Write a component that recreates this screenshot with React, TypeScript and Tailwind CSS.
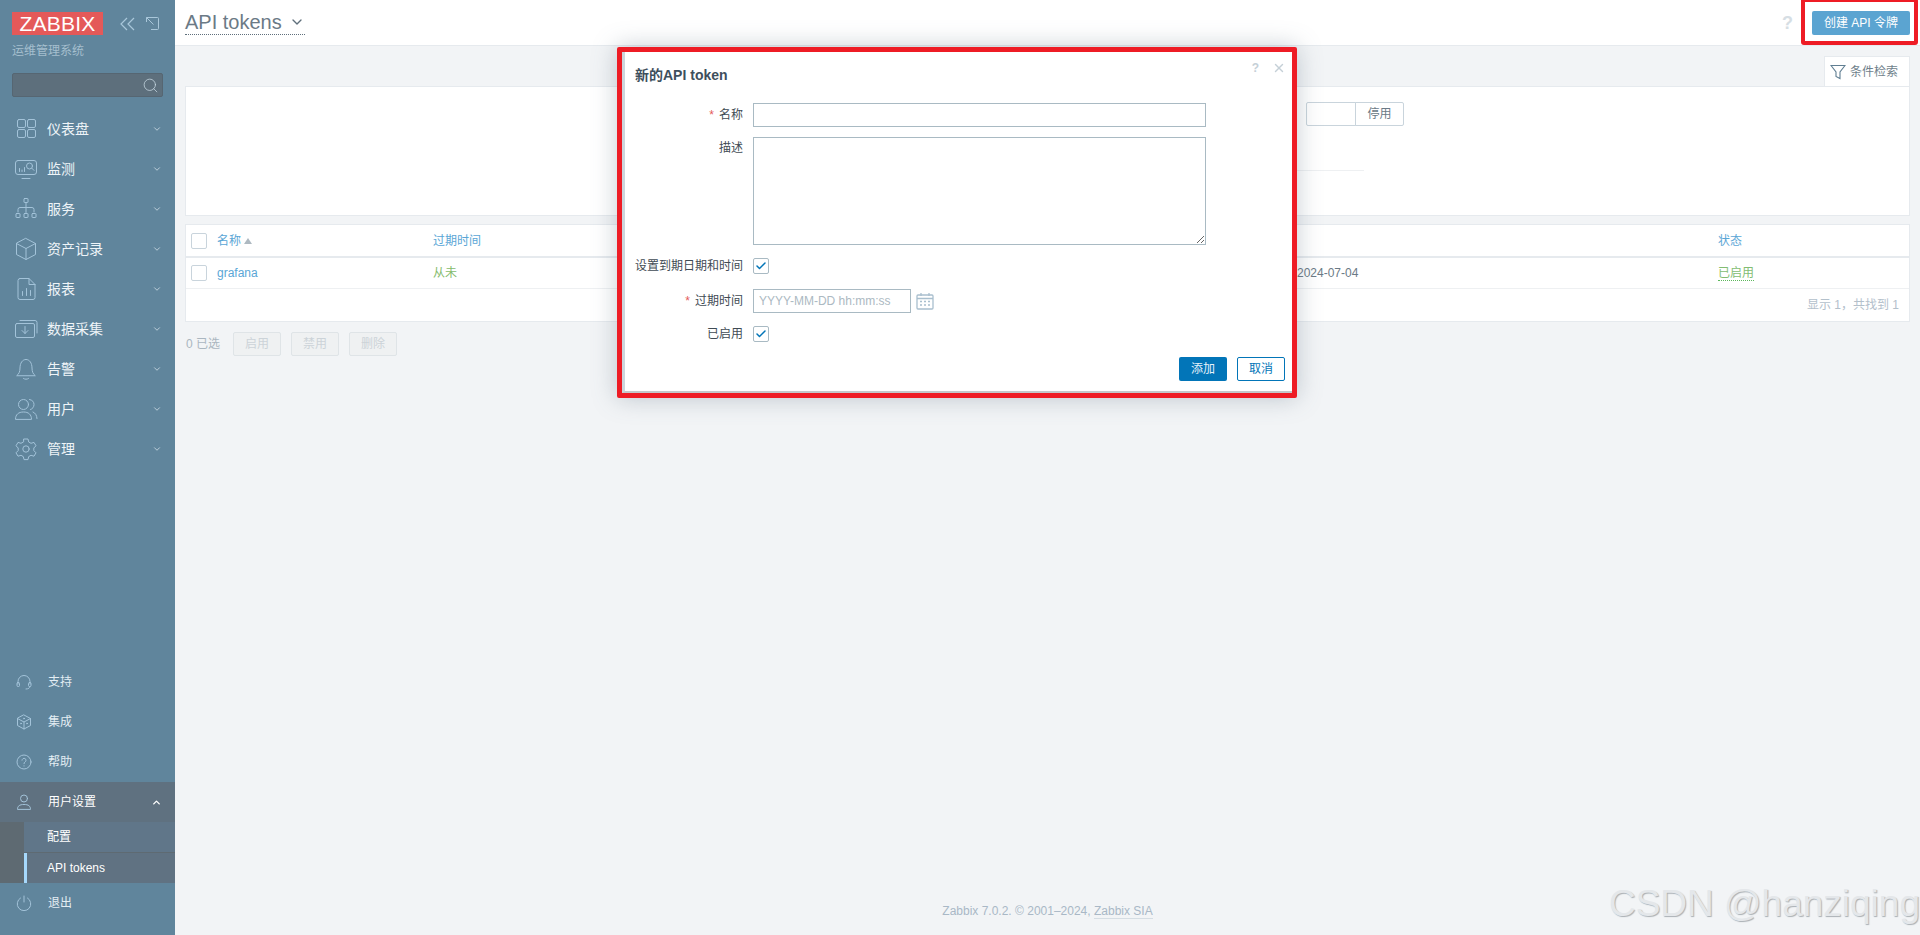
import React from 'react';
import { Check, ChevronDown, ChevronUp, Search, X } from 'lucide-react';

const FONT = { fontFamily: '"Liberation Sans", "Noto Sans CJK SC", sans-serif' };

const Ico: React.FC<{ size?: number; vb?: number; children: React.ReactNode }> = ({ size = 24, vb = 24, children }) => (
  <svg width={size} height={size} viewBox={`0 0 ${vb} ${vb}`} fill="none" stroke="#a3c3d9" strokeWidth="1" strokeLinecap="round" strokeLinejoin="round">
    {children}
  </svg>
);

const icons: Record<string, React.ReactNode> = {
  dashboard: (
    <Ico>
      <rect x="3.5" y="2.5" width="8" height="8" rx="1.5" />
      <rect x="13.5" y="2.5" width="8" height="8" rx="1.5" />
      <rect x="3.5" y="12.5" width="8" height="8" rx="1.5" />
      <rect x="13.5" y="12.5" width="8" height="8" rx="1.5" />
    </Ico>
  ),
  monitor: (
    <Ico>
      <rect x="1.5" y="3.5" width="21" height="14" rx="2.5" />
      <path d="M8 21.5h8M5.5 14.5v-3M8 14.5v-1.5M10.5 14.5v-4" />
      <circle cx="15.5" cy="9" r="3" />
      <path d="M17.8 11.2l2.2 2.2" />
    </Ico>
  ),
  services: (
    <Ico>
      <rect x="10" y="1.5" width="4" height="4" rx="0.5" />
      <path d="M12 5.5v10M4 15v-2.5a2 2 0 0 1 2-2h12a2 2 0 0 1 2 2V15" />
      <rect x="2" y="16.5" width="4" height="4" rx="0.5" />
      <rect x="10" y="16.5" width="4" height="4" rx="0.5" />
      <rect x="18" y="16.5" width="4" height="4" rx="0.5" />
    </Ico>
  ),
  box: (
    <Ico>
      <path d="M12 1.5l9.5 5v11l-9.5 5-9.5-5v-11z" />
      <path d="M2.5 6.5l9.5 5 9.5-5M12 11.5v11" />
    </Ico>
  ),
  report: (
    <Ico>
      <path d="M6 1.5h9l6 6v13a2 2 0 0 1-2 2H6a2 2 0 0 1-2-2v-17a2 2 0 0 1 2-2z" />
      <path d="M15 1.5v6h6M8.5 18.5v-4M12.5 18.5v-7M16.5 18.5v-5" />
    </Ico>
  ),
  collect: (
    <Ico>
      <rect x="1.5" y="6.5" width="19" height="14" rx="1.5" />
      <path d="M6 3.5h15a2 2 0 0 1 2 2V16M11 9.5v7M8 13.5l3 3 3-3" />
    </Ico>
  ),
  bell: (
    <Ico>
      <path d="M3 18.5c2-1.5 3-4 3-7.5 0-5 2.5-8.5 6-8.5s6 3.500 6 8.500c0 3.500 1 6 3 7.500z" />
      <path d="M9.500 21.500c1.500 1 3.500 1 5 0" />
    </Ico>
  ),
  users: (
    <Ico>
      <circle cx="9.500" cy="7.500" r="5" />
      <path d="M1.500 22c0-4.500 3-7 8-7s8 2.500 8 7zM15.500 2.500c3 .5 4.500 2.500 4.500 5s-1.500 4.500-3.500 5M19 15c2.500 1 3.800 3.500 4 6.500" />
    </Ico>
  ),
  gear: (
    <Ico>
      <path d="M10 2h4l.7 3 2.300 1.300 3-.9 2 3.400-2.200 2.200v2.600l2.200 2.200-2 3.400-3-.9-2.300 1.300-.7 3h-4l-.7-3-2.300-1.300-3 .9-2-3.400 2.200-2.200v-2.600L2 8.800l2-3.400 3 .9 2.300-1.300z" />
      <circle cx="12" cy="12" r="3.200" />
    </Ico>
  ),
  support: (
    <Ico size={16} vb={16}>
      <path d="M2 10V7.500a6 6 0 0 1 12 0V10" />
      <rect x="1" y="8.500" width="2.500" height="4" rx="1" />
      <rect x="12.500" y="8.500" width="2.500" height="4" rx="1" />
      <path d="M14 12.500c0 1.500-1.500 2.500-4 2.500" />
    </Ico>
  ),
  integration: (
    <Ico size={16} vb={16}>
      <path d="M8 1l6.500 3.500v7L8 15l-6.500-3.500v-7z" />
      <path d="M1.500 4.500L8 8l6.500-3.500M8 8v7" />
      <circle cx="8" cy="4.500" r="0.500" />
      <circle cx="5" cy="9.500" r="0.500" />
      <circle cx="11" cy="9.500" r="0.500" />
    </Ico>
  ),
  help: (
    <Ico size={16} vb={16}>
      <circle cx="8" cy="8" r="7" />
      <path d="M6 6.200a2 2 0 1 1 3 1.800c-.7.4-1 .9-1 1.700M8 11.800v.2" />
    </Ico>
  ),
  profile: (
    <Ico size={16} vb={16}>
      <circle cx="8" cy="4.500" r="3.500" />
      <path d="M1.500 15c0-3 2-4.500 6.500-4.500s6.500 1.500 6.500 4.500z" />
    </Ico>
  ),
  power: (
    <Ico size={16} vb={16}>
      <path d="M8 1v6M4.500 3a6.800 6.800 0 1 0 7 0" />
    </Ico>
  ),
};

const NavItem: React.FC<{ icon: string; label: string }> = ({ icon, label }) => (
  <div className="flex items-center h-10 pl-[14px] pr-[13px] text-sm text-[#eef4f8]">
    <span className="w-[33px] flex">{icons[icon]}</span>
    <span className="flex-1">{label}</span>
    <ChevronDown size={10} className="text-[#cddbe4]" strokeWidth={2} />
  </div>
);

const BottomItem: React.FC<{ icon: string; label: string }> = ({ icon, label }) => (
  <div className="flex items-center h-10 pl-[16px] text-xs text-[#e3edf3]">
    <span className="w-[32px] flex">{icons[icon]}</span>
    {label}
  </div>
);

const Sidebar = () => (
  <aside className="w-[175px] shrink-0 h-full bg-[#60859c] flex flex-col">
    <div className="flex items-start pl-3 pt-3">
      <div className="w-[91px] h-[23px] bg-[#e45959] text-white text-[21px] leading-[24px] text-center tracking-[0.2px]">ZABBIX</div>
      <svg width="16" height="14" viewBox="0 0 16 14" fill="none" stroke="#a9c7da" strokeWidth="1.200" className="ml-[17px] mt-[5px]">
        <path d="M7 1L1 7l6 6M14 1L8 7l6 6" />
      </svg>
      <svg width="13" height="13" viewBox="0 0 13 13" fill="none" stroke="#a9c7da" strokeWidth="1" className="ml-[10px] mt-[5px]">
        <path d="M3 .5h8.500a1 1 0 0 1 1 1v10a1 1 0 0 1-1 1H5M.5 .5l7 7M.5 .5V5M.5 .5H5" />
      </svg>
    </div>
    <div className="pl-3 mt-[9px] text-xs leading-[14px] text-[#a5bfce]">运维管理系统</div>
    <div className="mx-3 mt-[15px] h-6 bg-[#5d6f7c] border border-[#566672] rounded-[2px] flex items-center justify-end pr-[3px]">
      <Search size={17} strokeWidth={1} className="text-[#cfe0ea]" />
    </div>
    <nav className="mt-3">
      <NavItem icon="dashboard" label="仪表盘" />
      <NavItem icon="monitor" label="监测" />
      <NavItem icon="services" label="服务" />
      <NavItem icon="box" label="资产记录" />
      <NavItem icon="report" label="报表" />
      <NavItem icon="collect" label="数据采集" />
      <NavItem icon="bell" label="告警" />
      <NavItem icon="users" label="用户" />
      <NavItem icon="gear" label="管理" />
    </nav>
    <div className="flex-1" />
    <BottomItem icon="support" label="支持" />
    <BottomItem icon="integration" label="集成" />
    <BottomItem icon="help" label="帮助" />
    <div className="h-10 bg-[#5f7180] flex items-center pl-[16px] pr-[13px] text-xs text-white">
      <span className="w-[32px] flex">{icons.profile}</span>
      <span className="flex-1">用户设置</span>
      <ChevronUp size={11} strokeWidth={3} className="text-white" />
    </div>
    <div className="flex h-[61px] bg-[#5e6a72]">
      <div className="w-6" />
      <div className="flex-1 flex flex-col text-xs text-white">
        <div className="h-[30px] bg-[#607689] flex items-center pl-[23px]">配置</div>
        <div className="h-px bg-[#5e6a72]" />
        <div className="h-[30px] bg-[#607282] border-l-[3px] border-[#a6d8fb] flex items-center pl-5">API tokens</div>
      </div>
    </div>
    <BottomItem icon="power" label="退出" />
    <div className="h-3" />
  </aside>
);

const Box: React.FC<{ className?: string }> = ({ className = '' }) => (
  <div className={`w-4 h-4 border border-[#c9d4dc] bg-white rounded-[2px] shrink-0 ${className}`} />
);

const DisabledButton: React.FC<{ label: string }> = ({ label }) => (
  <div className="w-[48px] h-6 border border-[#dfe4e7] bg-[#eff1f2] rounded-[2px] flex items-center justify-center text-[#ccd3d8]">{label}</div>
);

const Main = () => (
  <main className="flex-1 min-w-0 h-full flex flex-col bg-[#f2f4f6] text-xs">
    <header className="h-[46px] shrink-0 bg-white border-b border-[#e6eaee] flex items-center pl-[10px] pr-[10px]">
      <div className="flex items-center gap-[7px] border-b border-dotted border-[#5f6f7b] h-[25px] text-[20px] leading-[24px] text-[#6b7a86] mb-[1px]">
        API tokens
        <ChevronDown size={16} strokeWidth={2} className="text-[#5f6f7b]" />
      </div>
      <div className="flex-1" />
      <div className="text-[18px] text-[#d6dee4] font-bold mr-[19px]">?</div>
      <div className="w-[98px] h-6 bg-[#5ba4d1] rounded-[2px] text-white flex items-center justify-center">创建 API 令牌</div>
    </header>

    <div className="flex justify-end px-[10px] mt-[10px]">
      <div className="w-[86px] h-[30px] bg-white border border-b-0 border-[#e6eaee] flex items-center pl-[5px] gap-[4px] text-[#6f7f8b]">
        <svg width="16" height="16" viewBox="0 0 16 16" fill="none" stroke="#5f7e92" strokeWidth="1.100">
          <path d="M1 1.500h14L10 8v6.500l-4-2V8z" />
        </svg>
        条件检索
      </div>
    </div>
    <section className="mx-[10px] h-[130px] bg-white border border-[#e6eaee] pt-[15px] relative">
      <div className="ml-[1120px] h-6 flex">
        <div className="w-[50px] border border-[#c9d4dc] rounded-l-[2px]" />
        <div className="w-[49px] -ml-px border border-[#c9d4dc] rounded-r-[2px] flex items-center justify-center text-[#6b7a86]">停用</div>
      </div>
      <div className="ml-[700px] mt-[44px] w-[478px] border-b border-[#eef0f2]" />
    </section>

    <section className="mx-[10px] mt-2 bg-white border border-[#e6eaee]">
      <div className="h-[31px] flex items-center border-b-[2px] border-[#e6eaee] box-content text-[#5aa6d6]">
        <Box className="ml-[5px]" />
        <div className="ml-[10px] w-[216px] flex items-center gap-[3px]">
          名称
          <span className="w-0 h-0 border-x-[4px] border-x-transparent border-b-[6px] border-b-[#aeb9c1]" />
        </div>
        <div className="flex-1">过期时间</div>
        <div className="w-[191px]">状态</div>
      </div>
      <div className="h-[30px] flex items-center border-b border-[#eef0f2] box-content">
        <Box className="ml-[5px]" />
        <div className="ml-[10px] w-[216px] text-[#5aa6d6]">grafana</div>
        <div className="w-[864px] text-[#84bb6c]">从未</div>
        <div className="flex-1 text-[#6b7a86]">2024-07-04</div>
        <div className="w-[191px]">
          <span className="text-[#82bd72] border-b border-dotted border-[#5cb85c]">已启用</span>
        </div>
      </div>
      <div className="h-[32px] flex items-center justify-end pr-[10px] text-[#b3c0cb]">显示 1，共找到 1</div>
    </section>

    <div className="mx-[11px] mt-[10px] flex items-center text-[#aab6c0]">
      <span className="w-[47px]">0 已选</span>
      <div className="flex gap-[10px]">
        <DisabledButton label="启用" />
        <DisabledButton label="禁用" />
        <DisabledButton label="删除" />
      </div>
    </div>

    <div className="flex-1" />
    <footer className="h-[36px] shrink-0 flex justify-center text-[#a9b8c6] pt-[4px]">
      <span>
        Zabbix 7.0.2. © 2001–2024,{' '}
        <span className="border-b border-[#d5dde3]">Zabbix SIA</span>
      </span>
    </footer>
  </main>
);

const FormRow: React.FC<{ label: string; required?: boolean; top?: boolean; className?: string; children: React.ReactNode }> = ({ label, required, top, className = '', children }) => (
  <div className={`flex ${top ? 'items-start' : 'items-center'} ${className}`}>
    <div className={`w-[108px] text-right text-[#3f4b54] ${top ? 'pt-[3px]' : ''}`}>
      {required && <span className="text-[#e45959] mr-[5px]">*</span>}
      {label}
    </div>
    <div className="ml-[10px] flex items-center">{children}</div>
  </div>
);

const CheckedBox = () => (
  <div className="w-4 h-4 border border-[#a9bac3] rounded-[2px] bg-white flex items-center justify-center">
    <Check size={12} strokeWidth={3} className="text-[#0275b8]" />
  </div>
);

const Dialog = () => (
  <div className="absolute left-[617px] top-[47px] w-[680px] h-[351px] border-[5px] border-[#ee1c25] rounded-[2px] shadow-[0_0_24px_rgba(90,110,125,0.35)] bg-white text-xs">
    <div className="h-full border-l-[3px] border-b-[2px] border-l-[#ccd6dc] border-b-[#c4c8ca] pl-[10px] pr-[7px] pt-[12px]">
      <div className="flex items-start">
        <h4 className="flex-1 mt-[3px] text-[14px] leading-4 font-bold text-[#3e4f5c]">新的API token</h4>
        <span className="text-[12px] leading-4 font-bold text-[#c5d0d7] -mt-[4px] mr-[13px]">?</span>
        <X size={14} strokeWidth={2.500} className="text-[#c5d0d7] -mt-[3px] -mr-[1px]" />
      </div>
      <div className="mt-[20px]">
        <FormRow label="名称" required>
          <input className="w-[453px] h-6 border border-[#a9bac3] bg-white outline-none" />
        </FormRow>
        <FormRow label="描述" top className="mt-[10px]">
          <textarea className="block w-[453px] h-[108px] border border-[#a9bac3] bg-white outline-none" />
        </FormRow>
        <FormRow label="设置到期日期和时间" className="mt-[13px]">
          <CheckedBox />
        </FormRow>
        <FormRow label="过期时间" required className="mt-[15px]">
          <input placeholder="YYYY-MM-DD hh:mm:ss" className="w-[158px] h-6 border border-[#a9bac3] bg-white px-[5px] outline-none placeholder:text-[#acb9c2]" />
          <svg width="18" height="18" viewBox="0 0 18 18" className="ml-[5px]" fill="none" stroke="#a9bfce" strokeWidth="1.300">
            <rect x="1" y="3" width="16" height="14" rx="1" />
            <path d="M1 6.500h16M5 1v3M13 1v3" />
            <path d="M4 9.500h2M8 9.500h2M12 9.500h2M4 13h2M8 13h2M12 13h2" strokeWidth="1.500" />
          </svg>
        </FormRow>
        <FormRow label="已启用" className="mt-[13px]">
          <CheckedBox />
        </FormRow>
      </div>
      <div className="flex justify-end gap-[10px] mt-[15px]">
        <div className="w-[48px] h-6 bg-[#0275b8] rounded-[2px] text-[#e6f2fa] flex items-center justify-center">添加</div>
        <div className="w-[48px] h-6 border border-[#0275b8] rounded-[2px] text-[#0275b8] flex items-center justify-center">取消</div>
      </div>
    </div>
  </div>
);

export default function App() {
  return (
    <div className="relative w-full h-[935px] overflow-hidden flex" style={FONT}>
      <Sidebar />
      <Main />
      <Dialog />
      {/* red box from the screenshot's annotation */}
      <div className="absolute left-[1801px] -top-[2px] w-[117px] h-[47px] border-[4px] border-[#ee1c25] rounded-[3px]" />
      {/* watermark */}
      <div className="absolute right-0 top-[884px] text-[37px] leading-[40px] text-[#e4e7ea] pointer-events-none [text-shadow:1px_1px_1px_#aab0b5]">
        CSDN @hanziqing
      </div>
    </div>
  );
}
